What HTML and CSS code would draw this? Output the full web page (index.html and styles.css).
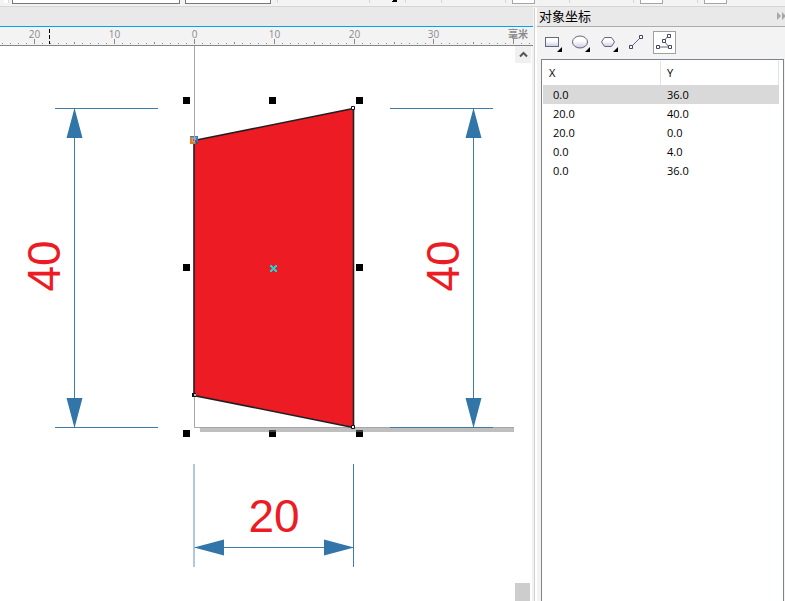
FILE: index.html
```html
<!DOCTYPE html>
<html lang="zh-CN">
<head>
<meta charset="utf-8">
<title>对象坐标</title>
<link rel="stylesheet" href="styles.css">
</head>
<body>
<div class="app">
  <header class="propbar">
    <span class="grip"></span>
    <input class="combo combo-wide" type="text" aria-label="Preset">
    <input class="combo combo-small" type="text" aria-label="Size">
    <div class="group group-wide"></div>
    <div class="group group-arrow"><svg class="arrow" width="5" height="2" viewBox="0 0 5 2"><path d="M1 0h4v2H0V1h1z"/></svg></div>
    <div class="group group-short"></div>
    <div class="group group-tool"></div>
    <div class="group group-tool"><button type="button" class="tool-cut" aria-label="Tool 1"></button></div>
    <div class="group group-tool"></div>
    <div class="group group-tool"><button type="button" class="tool-cut" aria-label="Tool 2"></button></div>
    <div class="group group-tool"><button type="button" class="tool-cut" aria-label="Tool 3"></button></div>
  </header>
  <div class="workspace">
    <main class="document">
      <div class="tabs"></div>
      <div class="ruler"><svg id="ruler" width="533" height="18"></svg></div>
      <div class="canvas">
        <svg class="drawing" width="515" height="555" viewBox="0 46 515 555">
          <path class="shadow" d="M200 428H514V432H200z"/>
          <path class="page" d="M194.500 46V427.500H514"/>
          <path class="shape" d="M194 140.500L353.500 108.500V427.500L194 395.500z"/>
          <path class="page" d="M194.500 46V140"/>
          <g class="dim">
            <path d="M55 108.500H158M55 427.500H158M74.500 109V427M390 108.500H493M390 427.500H493M473.500 109V427M353.500 464V567M195 547.500H353"/>
            <path class="dim-soft" d="M194 464V567"/>
            <path class="head" d="M74.500 108L82.500 138H66.500zM74.500 428L82.500 398H66.500zM473.500 108L481.500 138H465.500zM473.500 428L481.500 398H465.500zM194 547.500L224 539.500V555.500zM354 547.500L324 539.500V555.500z"/>
          </g>
          <g class="dim-text">
            <text transform="translate(60 266) rotate(-90)">40</text>
            <text transform="translate(459 266) rotate(-90)">40</text>
            <text x="274" y="532">20</text>
          </g>
          <g class="handles">
            <path d="M183 97h7v7h-7zM269 97h7v7h-7zM356 97h7v7h-7zM183 264h7v7h-7zM356 264h7v7h-7zM183 430h7v7h-7zM269 430h7v7h-7zM356 430h7v7h-7z"/>
            <path class="handle-shade" d="M269 430h7v2h-7zM356 430h7v2h-7z"/>
          </g>
          <path class="center" d="M270 265h2v1h1v1h1v-1h1v-1h2v2h-1v1h-1v1h1v1h1v2h-2v-1h-1v-1h-1v1h-1v1h-2v-2h1v-1h1v-1h-1v-1h-1z"/>
          <rect x="190" y="136" width="8" height="8" fill="#0a84ff"/>
          <path d="M190 137h7v1h-5v4h3v2h-5z" fill="#e87a1c"/>
          <rect x="192.500" y="138.500" width="3" height="3" fill="#0a84ff" stroke="#cfa27c"/>
          <path d="M195 140h2v2h-2z" fill="#d22"/><path d="M196 142h2v2h-2z" fill="#1d6b55"/>
          <path class="page" d="M194.500 136V143"/>
          <g class="nodes">
            <path d="M351.500 106.500h3v3h-3zM351.500 425.500h3v3h-3z"/>
            <path d="M192 393h4v4h-4z" class="node-dark"/>
            <path d="M194 394h2v2h-2z" class="node-light"/>
          </g>
        </svg>
        <div class="scrollbar">
          <button type="button" class="scroll-up" aria-label="Scroll up"><svg width="9" height="7" viewBox="0 0 9 7"><path d="M1 5.500L4.500 2L8 5.500"/></svg></button>
          <div class="thumb"></div>
        </div>
      </div>
    </main>
    <div class="splitter"></div>
    <aside class="docker">
      <div class="docker-title">
        <h1>对象坐标</h1>
        <button type="button" class="collapse" aria-label="Collapse"><svg width="8" height="8" viewBox="0 0 8 8"><path d="M0 0L4 4L0 8zM5 0L9 4L5 8z"/></svg></button>
      </div>
      <div class="tools">
        <button type="button" class="tool" aria-label="Rectangle"><svg width="22" height="22" viewBox="-1 0 22 22"><defs><linearGradient id="g" x2="0" y2="1"><stop offset=".4" stop-color="#fff"/><stop offset="1" stop-color="#c9cbe0"/></linearGradient></defs><rect class="fill" x="3.500" y="5.500" width="13" height="9"/><path class="corner" d="M20 15v5h-5z"/></svg></button>
        <button type="button" class="tool" aria-label="Ellipse"><svg width="22" height="22" viewBox="-1 0 22 22"><ellipse class="fill" cx="10" cy="10" rx="7.500" ry="6"/><path class="corner" d="M20 15v5h-5z"/></svg></button>
        <button type="button" class="tool" aria-label="Polygon"><svg width="22" height="22" viewBox="-1 0 22 22"><path class="fill" d="M3.500 10L6.500 5.500H13.500L16.500 10L13.500 14.500H6.500z"/><path class="corner" d="M20 15v5h-5z"/></svg></button>
        <button type="button" class="tool" aria-label="Line"><svg width="22" height="22" viewBox="-1 0 22 22"><path class="line" d="M6 14L14 6"/><path class="node" d="M3.500 13.500h3v3h-3zM13.500 3.500h3v3h-3z"/></svg></button>
        <button type="button" class="tool tool-active" aria-label="Multiple points" aria-pressed="true"><svg width="22" height="22" viewBox="0 0 22 22"><path class="line" d="M14 4L10 9L15 15H4"/><path class="node" d="M2.500 13.500h3v3h-3zM14.500 13.500h3v3h-3zM8.500 7.500h3v3h-3zM13.500 2.500h3v3h-3z"/></svg></button>
      </div>
      <div class="list">
        <table class="coords">
          <thead><tr><th scope="col">X</th><th scope="col">Y</th></tr></thead>
          <tbody>
            <tr class="selected"><td>0.0</td><td>36.0</td></tr>
            <tr><td>20.0</td><td>40.0</td></tr>
            <tr><td>20.0</td><td>0.0</td></tr>
            <tr><td>0.0</td><td>4.0</td></tr>
            <tr><td>0.0</td><td>36.0</td></tr>
          </tbody>
        </table>
      </div>
    </aside>
  </div>
</div>
<script src="ruler.js"></script>
</body>
</html>
```
FILE: styles.css
```css
* { box-sizing: border-box; }
html, body { height: 100%; }
body { margin: 0; overflow: hidden; background: #f3f3f3; color: #000; font: 11px "Open Sans", "Noto Sans CJK SC", sans-serif; }
button { border: 0; padding: 0; background: none; display: block; }
svg { display: block; }
h1 { margin: 0; }

.app { height: 100%; display: flex; flex-direction: column; }
.propbar { height: 7px; flex: none; display: flex; align-items: flex-start; border-bottom: 1px solid #d6d6d6; overflow: hidden; }
.grip { width: 5px; height: 3px; margin: 0 3px 0 4px; background: #fff; border-right: 1px solid #ddd; flex: none; }
.combo { height: 4px; padding: 0; border: 1px solid #777; border-top: 0; border-radius: 0; background: #fff; outline: 0; flex: none; }
.combo-wide { width: 168px; margin-right: 5px; }
.combo-small { width: 86px; margin-right: 6px; }
.group { height: 3px; border-left: 1px solid #d6d6d6; display: flex; flex: none; }
.group-wide { width: 92px; }
.group-arrow { width: 36px; justify-content: flex-end; padding-right: 8px; }
.group-short { width: 36px; }
.group-tool { width: 64px; padding-left: 6px; }
.tool-cut { width: 23px; height: 4px; flex: none; border: 1px solid #a6a6a6; border-top: 0; background: #fff; }
.arrow { fill: #000; }

.workspace { flex: 1; min-height: 0; display: flex; }
.document { flex: 1; min-width: 0; display: flex; flex-direction: column; }
.tabs { height: 20px; flex: none; background: #e9e9e9; border-bottom: 1px solid #00a2f3; }
.ruler { height: 19px; flex: none; background: #f3f3f3; border-bottom: 1px solid #858585; overflow: hidden; }
.ruler text { font: 10px "Open Sans", "Noto Sans CJK SC", sans-serif; fill: #8a8a8a; text-anchor: middle; }
.ruler .unit { font-weight: 700; }
.ruler path { stroke: #8a8a8a; }
.ruler .cursor { stroke: #000; stroke-dasharray: 4 2; }
.canvas { flex: 1; min-height: 0; display: flex; justify-content: space-between; background: #fff; overflow: hidden; }
.drawing { flex: none; }
.shadow { fill: #bfbfbf; }
.page { fill: none; stroke: #a6a6a6; }
.shape { fill: #ed1c24; stroke: #231f20; stroke-width: 1.6; }
.dim path { stroke: #3f7cae; fill: none; }
.dim .dim-soft { stroke: #5f93bd; }
.dim .head { fill: #3275a9; stroke: none; }
.dim-text { fill: #ed1c24; text-anchor: middle; font: 46px "Liberation Sans", sans-serif; }
.handle-shade { fill: #404040; }
.center { fill: #19d6d6; }
.nodes path { fill: #fff; stroke: #111; }
.nodes .node-dark { fill: #111; stroke: none; }
.nodes .node-light { fill: #9cc; stroke: none; }
.scrollbar { width: 18px; flex: none; display: flex; flex-direction: column; justify-content: space-between; border-right: 1px solid #f0f0f0; }
.scroll-up { width: 16px; height: 17px; background: #f0f0f0; display: grid; place-items: center; }
.scroll-up path { fill: none; stroke: #555; stroke-width: 2; }
.thumb { width: 15px; height: 18px; background: #cdcdcd; }
.splitter { width: 4px; flex: none; margin-top: 1px; background: #fff; border-left: 1px solid #f3f3f3; box-shadow: inset 1px 0 #d0d0d0; }

.docker { width: 248px; flex: none; display: flex; flex-direction: column; background: #f3f3f3; }
.docker-title { height: 20px; flex: none; display: flex; align-items: center; justify-content: space-between; padding: 0 0 2px 2px; background: #e9e9e9; border-bottom: 1px solid #acacac; }
.docker-title h1 { font: 13px/17px "Noto Sans CJK SC", sans-serif; }
.collapse svg { fill: #a8a8a8; }
.tools { height: 32px; flex: none; display: flex; gap: 5px; padding: 4px 0 0 4px; }
.tool { width: 23px; height: 23px; }
.tool-active { background: #fff; border: 1px solid #a0a0a0; }
.fill { fill: url(#g); stroke: #66667c; }
.corner { fill: #000; }
.line { fill: none; stroke: #66667c; }
.node { fill: #fff; stroke: #44446c; }
.list { flex: 1; min-height: 0; margin: 0 1px 0 4px; padding: 1px 4px 0 1px; border: 1px solid #7d838b; border-bottom: 0; background: #fff; }
.coords { width: 100%; border-collapse: separate; border-spacing: 0; table-layout: fixed; }
.coords th { height: 24px; padding: 0 6px 2px; text-align: left; font-weight: 400; border-right: 1px solid #e2e2e2; }
.coords td { height: 19px; padding: 0 6px; line-height: 19px; }
.coords td:first-child { padding-left: 10px; }
.selected { background: #d9d9d9; }
```
FILE: ruler.js
```js
// Draws the ruler: one tick per unit, about 8px apart, with the origin at 194px.
const ruler = document.getElementById("ruler");
const NS = "http://www.w3.org/2000/svg";
function add(name, attrs, text) {
  const el = document.createElementNS(NS, name);
  for (const key in attrs) el.setAttribute(key, attrs[key]);
  if (text) el.textContent = text;
  ruler.appendChild(el);
}
for (let n = -24; n <= 42; n++) {
  const x = Math.round(194 + n * 7.98) + 0.5;
  const size = n % 10 === 0 ? 5 : n % 5 === 0 ? 2 : 1;
  add("path", { d: `M${x} ${17 - size}V17` });
  if (n % 10 === 0 && n < 40) add("text", { x, y: 11 }, String(Math.abs(n)));
}
add("text", { x: 518, y: 11, class: "unit" }, "毫米");
add("path", { class: "cursor", d: "M49.5 2V17" });
```
